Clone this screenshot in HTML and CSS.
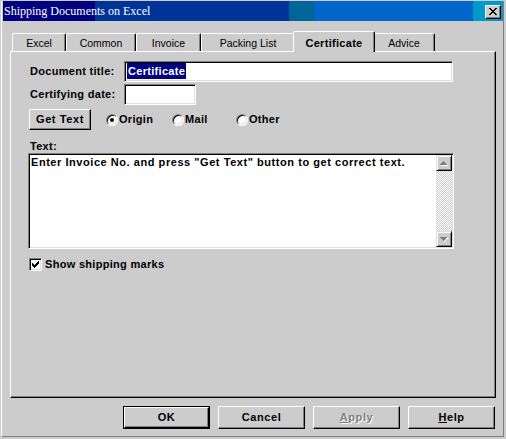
FILE: index.html
```html
<!DOCTYPE html>
<html>
<head>
<meta charset="utf-8">
<title>Shipping Documents on Excel</title>
<link rel="stylesheet" href="styles.css">
</head>
<body>
<div class="window">
  <div class="frame">
    <div class="titlebar">
      <span class="title">Shipping Documents on Excel</span>
      <span class="close">
        <svg width="8" height="7" viewBox="0 0 8 7" shape-rendering="crispEdges">
          <path fill="#000" d="M0 0h2v1H0zM6 0h2v1H6zM1 1h2v1H1zM5 1h2v1H5zM2 2h4v1H2zM3 3h2v1H3zM2 4h4v1H2zM1 5h2v1H1zM5 5h2v1H5zM0 6h2v1H0zM6 6h2v1H6z"/>
        </svg>
      </span>
    </div>
    <div class="client">
      <div class="tabs">
        <div class="tab w-excel">Excel</div>
        <div class="tab w-common">Common</div>
        <div class="tab w-invoice">Invoice</div>
        <div class="tab w-packing">Packing List</div>
        <div class="tab tab-active w-cert">Certificate</div>
        <div class="tab w-advice">Advice</div>
      </div>
      <div class="panel">
        <div class="row r1">
          <span class="lbl">Document title:</span>
          <div class="field f-title"><span class="sel">Certificate</span></div>
        </div>
        <div class="row r2">
          <span class="lbl">Certifying date:</span>
          <div class="field f-date"></div>
        </div>
        <div class="row r3">
          <div class="btn btn-get">Get Text</div>
          <div class="radio w-origin"><span class="rb rb-on"></span><span class="rtext">Origin</span></div>
          <div class="radio w-mail"><span class="rb"></span><span class="rtext">Mail</span></div>
          <div class="radio"><span class="rb"></span><span class="rtext">Other</span></div>
        </div>
        <div class="text-lbl">Text:</div>
        <div class="memo">
          <div class="memo-text">Enter Invoice No. and press "Get Text" button to get correct text.</div>
          <div class="vscroll">
            <div class="sbtn">
              <svg width="8" height="5" viewBox="0 0 8 5" shape-rendering="crispEdges">
                <path fill="#fff" d="M4 1h1v1H4zM5 2h1v1H5zM6 3h1v1H6zM1 4h7v1H1z"/>
                <path fill="#808080" d="M3 0h1v1H3zM2 1h3v1H2zM1 2h5v1H1zM0 3h7v1H0z"/>
              </svg>
            </div>
            <div class="track"></div>
            <div class="sbtn">
              <svg width="8" height="5" viewBox="0 0 8 5" shape-rendering="crispEdges">
                <path fill="#fff" d="M1 1h7v1H1zM6 2h1v1H6zM5 3h1v1H5zM4 4h1v1H4z"/>
                <path fill="#808080" d="M0 0h7v1H0zM1 1h5v1H1zM2 2h3v1H2zM3 3h1v1H3z"/>
              </svg>
            </div>
          </div>
        </div>
        <div class="chk-row">
          <span class="cb">
            <svg width="7" height="7" viewBox="0 0 7 7" shape-rendering="crispEdges">
              <path fill="#000" d="M6 0h1v1H6zM5 1h2v1H5zM0 2h1v1H0zM4 2h3v1H4zM0 3h2v1H0zM3 3h3v1H3zM0 4h5v1H0zM1 5h3v1H1zM2 6h1v1H2z"/>
            </svg>
          </span>
          <span class="ctext">Show shipping marks</span>
        </div>
      </div>
      <div class="buttons">
        <div class="btn-default"><div class="btn btn-dlg">OK</div></div>
        <div class="btn btn-dlg">Cancel</div>
        <div class="btn btn-dlg btn-disabled"><span class="ul">A</span>pply</div>
        <div class="btn btn-dlg"><span class="ul">H</span>elp</div>
      </div>
    </div>
  </div>
</div>
</body>
</html>
```
FILE: styles.css
```css
* { box-sizing: border-box; }
html, body { margin: 0; padding: 0; background: #cccccc; }
body {
  font-family: "Liberation Sans", Arial, sans-serif;
  font-size: 11px;
  font-weight: bold;
  letter-spacing: 0.3px;
  color: #000;
}

.window {
  width: 506px;
  height: 439px;
  background: #cccccc;
  border-style: solid;
  border-color: #cccccc;
  border-width: 1px 2px 2px 1px;
}
.frame {
  height: 100%;
  border-style: solid;
  border-width: 0 1px 1px 1px;
  border-color: #fff #808080 #808080 #fff;
  padding: 0 0 0 1px;
  display: flex;
  flex-direction: column;
}

.titlebar {
  height: 20px;
  display: flex;
  align-items: flex-start;
  justify-content: space-between;
  background: linear-gradient(to right,
    #000080 0, #000080 92px,
    #003399 92px, #003399 286px,
    #006699 286px, #006699 312px,
    #0066cc 312px, #0066cc 470px,
    #0099cc 470px, #0099cc 100%);
}
.title {
  font-family: "Liberation Serif", "Times New Roman", serif;
  font-weight: normal;
  font-size: 12px;
  letter-spacing: 0;
  color: #fff;
  line-height: 19px;
  padding: 1px 0 0 1px;
  white-space: nowrap;
}
.close {
  width: 16px;
  height: 14px;
  margin: 4px 2px 0 0;
  background: #cccccc;
  border: 1px solid;
  border-color: #fff #000 #000 #fff;
  box-shadow: inset -1px -1px 0 #808080;
  display: flex;
  align-items: center;
  justify-content: center;
}
.close svg { display: block; margin: 0 1px 1px 0; }

.client {
  flex: 1;
  padding: 10px 7px 0 7px;
}

/* tabs */
.tabs {
  height: 20px;
  display: flex;
  align-items: flex-end;
  padding-left: 2px;
}
.tab {
  height: 18px;
  border-style: solid;
  border-width: 1px 1px 0 1px;
  border-color: #fff #000 transparent #fff;
  border-radius: 2px 2px 0 0;
  box-shadow: inset -1px 0 0 #808080;
  background: #cccccc;
  text-align: center;
  font-weight: normal;
  font-size: 10.5px;
  letter-spacing: 0;
  line-height: 12px;
  padding-top: 3px;
  white-space: nowrap;
}
.w-excel { width: 54px; }
.w-common { width: 70px; }
.w-invoice { width: 65px; }
.w-packing { width: 94px; }
.w-cert { width: 78px; }
.w-advice { width: 62px; }
.tab-active {
  width: 82px;
  height: 21px;
  margin: 0 -2px -1px -2px;
  position: relative;
  z-index: 1;
  padding-top: 5px;
  font-weight: bold;
  font-size: 11px;
  letter-spacing: 0.3px;
}

.panel {
  height: 347px;
  border: 1px solid;
  border-color: #fff #000 #000 #fff;
  box-shadow: inset -1px -1px 0 #808080;
  padding: 9px 0 0 17px;
}

.row {
  display: flex;
  align-items: center;
  height: 21px;
}
.r2 { margin-top: 2px; }
.r3 { margin-top: 4px; }
.lbl {
  width: 96px;
  padding-left: 2px;
  line-height: 13px;
  white-space: nowrap;
}
.field {
  height: 21px;
  background: #fff;
  border: 1px solid;
  border-color: #808080 #fff #fff #808080;
  box-shadow: inset 1px 1px 0 #000, inset -1px -1px 0 #dfdfdf;
  padding: 1px 0 0 2px;
}
.f-title { width: 329px; }
.f-date { width: 72px; }
.sel {
  display: inline-block;
  height: 16px;
  line-height: 16px;
  padding: 0 1px;
  background: #000080;
  color: #fff;
}

.btn {
  background: #cccccc;
  border: 1px solid;
  border-color: #fff #000 #000 #fff;
  box-shadow: inset -1px -1px 0 #808080;
  display: flex;
  align-items: center;
  justify-content: center;
  white-space: nowrap;
  line-height: 13px;
  letter-spacing: 0.6px;
}
.btn-get {
  width: 62px;
  height: 21px;
  margin-left: 1px;
  padding-bottom: 1px;
}
.radio {
  display: flex;
  align-items: center;
  width: 66px;
}
.w-origin { margin-left: 15px; }
.w-mail { width: 64px; }
.rb {
  width: 12px;
  height: 12px;
  border-radius: 50%;
  border: 1px solid;
  border-color: #808080 #fff #fff #808080;
  box-shadow: inset 1px 1px 0 #000, inset -1px -1px 0 #dfdfdf;
  background: #fff;
  display: flex;
  align-items: center;
  justify-content: center;
}
.rb-on::after {
  content: "";
  width: 4px;
  height: 4px;
  border-radius: 50%;
  background: #000;
}
.rtext { margin-left: 1px; line-height: 13px; }

.text-lbl {
  margin-top: 10px;
  height: 13px;
  line-height: 13px;
  padding-left: 2px;
}
.memo {
  width: 426px;
  height: 96px;
  display: flex;
  background: #fff;
  border: 1px solid;
  border-color: #808080 #fff #fff #808080;
  box-shadow: inset 1px 1px 0 #000, inset -1px -1px 0 #dfdfdf;
  padding: 1px;
}
.memo-text {
  flex: 1;
  padding: 1px 0 0 1px;
  line-height: 13px;
  letter-spacing: 0.55px;
  white-space: nowrap;
}
.vscroll {
  width: 16px;
  display: flex;
  flex-direction: column;
}
.sbtn {
  width: 16px;
  height: 16px;
  background: #cccccc;
  border: 1px solid;
  border-color: #dfdfdf #000 #000 #dfdfdf;
  box-shadow: inset 1px 1px 0 #fff, inset -1px -1px 0 #808080;
  display: flex;
  align-items: center;
  justify-content: center;
}
.track {
  flex: 1;
  background: repeating-conic-gradient(#fff 0 25%, #cccccc 0 50%) 0 0 / 2px 2px;
}

.chk-row {
  display: flex;
  align-items: center;
  margin-top: 9px;
  height: 13px;
}
.cb {
  width: 13px;
  height: 13px;
  margin-left: 1px;
  background: #fff;
  border: 1px solid;
  border-color: #808080 #fff #fff #808080;
  box-shadow: inset 1px 1px 0 #000, inset -1px -1px 0 #dfdfdf;
  display: flex;
  align-items: center;
  justify-content: center;
}
.ctext { margin-left: 3px; line-height: 13px; }

.buttons {
  margin-top: 8px;
  display: flex;
  justify-content: flex-end;
  gap: 8px;
  padding-right: 1px;
}
.btn-dlg {
  width: 87px;
  height: 23px;
  padding-bottom: 1px;
}
.btn-default {
  width: 87px;
  height: 23px;
  border: 1px solid #000;
}
.btn-default .btn-dlg {
  width: 85px;
  height: 21px;
}
.btn-disabled {
  color: #808080;
  text-shadow: 1px 1px 0 #fff;
}
.ul { text-decoration: underline; }
```
